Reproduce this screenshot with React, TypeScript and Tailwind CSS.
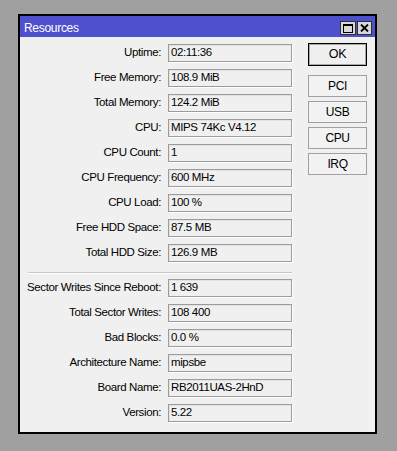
import React from "react";

const group1: [string, string][] = [
  ["Uptime:", "02:11:36"],
  ["Free Memory:", "108.9 MiB"],
  ["Total Memory:", "124.2 MiB"],
  ["CPU:", "MIPS 74Kc V4.12"],
  ["CPU Count:", "1"],
  ["CPU Frequency:", "600 MHz"],
  ["CPU Load:", "100 %"],
  ["Free HDD Space:", "87.5 MB"],
  ["Total HDD Size:", "126.9 MB"],
];

const group2: [string, string][] = [
  ["Sector Writes Since Reboot:", "1 639"],
  ["Total Sector Writes:", "108 400"],
  ["Bad Blocks:", "0.0 %"],
  ["Architecture Name:", "mipsbe"],
  ["Board Name:", "RB2011UAS-2HnD"],
  ["Version:", "5.22"],
];

function Row({ label, value }: { label: string; value: string }) {
  return (
    <div className="flex items-center h-[18px]">
      <div className="w-[141px] text-right leading-none whitespace-nowrap">{label}</div>
      <div className="ml-[7px] w-[124px] h-[18px] border border-[#9c9c9c] shadow-[1px_1px_0_#ffffff,inset_1px_1px_0_#e2e2e2] flex items-center pl-[2px] leading-none whitespace-nowrap">
        {value}
      </div>
    </div>
  );
}

function Btn({ children, def }: { children: React.ReactNode; def?: boolean }) {
  return (
    <div
      className={
        def
          ? "w-[59px] h-[23px] border border-black shadow-[inset_0_0_0_1px_#a8a8a8] bg-[#f0f0f0] flex items-center justify-center text-[12.5px] leading-none"
          : "w-[59px] h-[22px] border border-[#a0a0a0] bg-[#f2f2f2] flex items-center justify-center text-[12px] leading-none"
      }
    >
      {children}
    </div>
  );
}

export default function App() {
  return (
    <div className="w-[397px] h-[451px] bg-[#a0a0a0] pt-[14px] pl-[18px] font-['Liberation_Sans',Arial,sans-serif] text-[11.5px] tracking-[-0.38px] text-black">
      <div className="w-[359px] h-[420px] border-2 border-black bg-[#f0f0f0] flex flex-col">
        <div className="h-[21px] bg-[#4f50cd] flex items-center justify-between pl-[4px] pr-[3px] pt-[3px]">
          <span className="text-white text-[12px] leading-none tracking-[-0.3px]">Resources</span>
          <div className="flex gap-[1px]">
            <div className="w-[16px] h-[14px] bg-[#d8d8d8] border border-[#303030] flex items-center justify-center">
              <div className="w-[10px] h-[9px] border border-black border-t-2" />
            </div>
            <div className="w-[15px] h-[14px] bg-[#d8d8d8] border border-[#303030] flex items-center justify-center">
              <svg width="9" height="8" viewBox="0 0 9 8">
                <path d="M1 0.5 L8 7.5 M8 0.5 L1 7.5" stroke="#000" strokeWidth="1.8" />
              </svg>
            </div>
          </div>
        </div>
        <div className="flex">
          <div className="flex flex-col pt-[7px]">
            <div className="flex flex-col gap-[7px]">
              {group1.map(([l, v]) => (
                <Row key={l} label={l} value={v} />
              ))}
            </div>
            <div className="mt-[10px] ml-[8px] w-[264px] h-px bg-[#c8c8c8] shadow-[0_1px_0_#ffffff]" />
            <div className="mt-[6px] flex flex-col gap-[7px]">
              {group2.map(([l, v]) => (
                <Row key={l} label={l} value={v} />
              ))}
            </div>
          </div>
          <div className="ml-[16px] pt-[6px] flex flex-col">
            <Btn def>OK</Btn>
            <div className="mt-[9px] flex flex-col gap-[4px]">
              <Btn>PCI</Btn>
              <Btn>USB</Btn>
              <Btn>CPU</Btn>
              <Btn>IRQ</Btn>
            </div>
          </div>
        </div>
      </div>
    </div>
  );
}
